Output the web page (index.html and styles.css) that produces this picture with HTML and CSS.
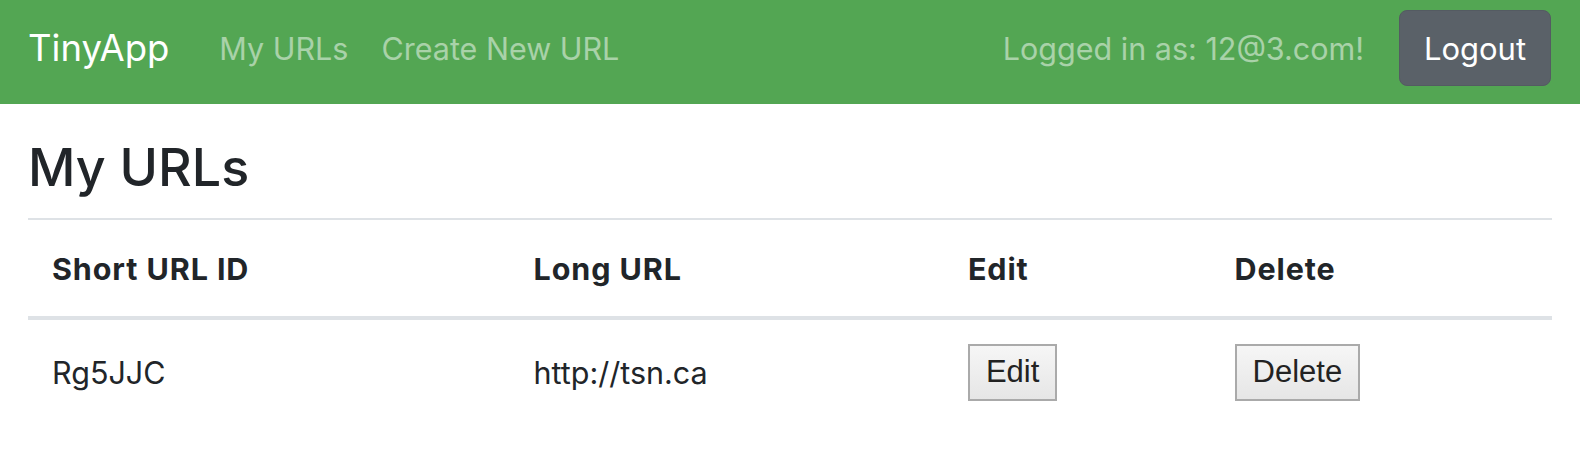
FILE: index.html
```html
<!DOCTYPE html>
<html lang="en">
<head>
<meta charset="utf-8">
<title>TinyApp</title>
<link rel="stylesheet" href="styles.css">
</head>
<body>
<nav class="navbar">
  <a class="brand" href="#">TinyApp</a>
  <ul class="nav-links">
    <li><a href="#">My URLs</a></li>
    <li><a href="#">Create New URL</a></li>
  </ul>
  <div class="nav-right">
    <span class="login">Logged in as: 12@3.com!</span>
    <button class="logout" type="button">Logout</button>
  </div>
</nav>
<main class="container">
  <h1 class="title">My URLs</h1>
  <hr class="rule">
  <table class="urls">
    <thead>
      <tr>
        <th class="c1">Short URL ID</th>
        <th class="c2">Long URL</th>
        <th class="c3">Edit</th>
        <th class="c4">Delete</th>
      </tr>
    </thead>
    <tbody>
      <tr>
        <td>Rg5JJC</td>
        <td>http://tsn.ca</td>
        <td><button class="plain" type="button">Edit</button></td>
        <td><button class="plain" type="button">Delete</button></td>
      </tr>
    </tbody>
  </table>
</main>
</body>
</html>
```
FILE: styles.css
```css
* { box-sizing: border-box; }
html, body { margin: 0; padding: 0; background: #fff; }
body {
  font-family: Inter, "Noto Sans", Roboto, sans-serif;
  font-size: 30.5px;
  color: #212529;
}
.navbar {
  display: flex;
  align-items: center;
  height: 104px;
  padding: 0 29px 8px 28px;
  background: #53a653;
}
.brand {
  font-size: 36.5px;
  color: #fff;
  text-decoration: none;
  margin-right: 50px;
}
.nav-links {
  display: flex;
  gap: 33px;
  list-style: none;
  margin: 0;
  padding: 0;
}
.nav-links a, .login {
  color: rgba(255,255,255,0.5);
  text-decoration: none;
  font-size: 30.5px;
}
.nav-right {
  margin-left: auto;
  display: flex;
  align-items: center;
  gap: 35px;
}
.logout {
  font-family: inherit;
  font-size: 31px;
  color: #fff;
  background: #5a6168;
  border: 1px solid #545b62;
  border-radius: 8px;
  width: 152px;
  height: 76px;
  padding: 0;
}
.container {
  padding: 33px 28px 0 28px;
}
.title {
  margin: 0;
  font-size: 52px;
  font-weight: 500;
  line-height: 1.2;
}
.rule {
  margin: 19px 0 0 0;
  border: 0;
  border-top: 2px solid #dee2e6;
}
.urls {
  width: 100%;
  border-collapse: collapse;
}
.urls th, .urls td {
  text-align: left;
  padding: 0 24px;
  vertical-align: middle;
}
.urls th {
  font-weight: 700;
  letter-spacing: 0.9px;
  height: 98px;
  border-bottom: 4px solid #dee2e6;
}
.urls td { height: 106px; }
.c1 { width: 31.6%; }
.c2 { width: 28.5%; }
.c3 { width: 17.5%; }
.c4 { width: 22.4%; }
.plain {
  font-family: "Liberation Sans", Arial, sans-serif;
  font-size: 31px;
  color: #222;
  background: linear-gradient(#f6f6f6, #e6e6e6);
  border: 2px solid #aaa;
  border-radius: 0;
  height: 57px;
  padding: 0 16px;
}
```
